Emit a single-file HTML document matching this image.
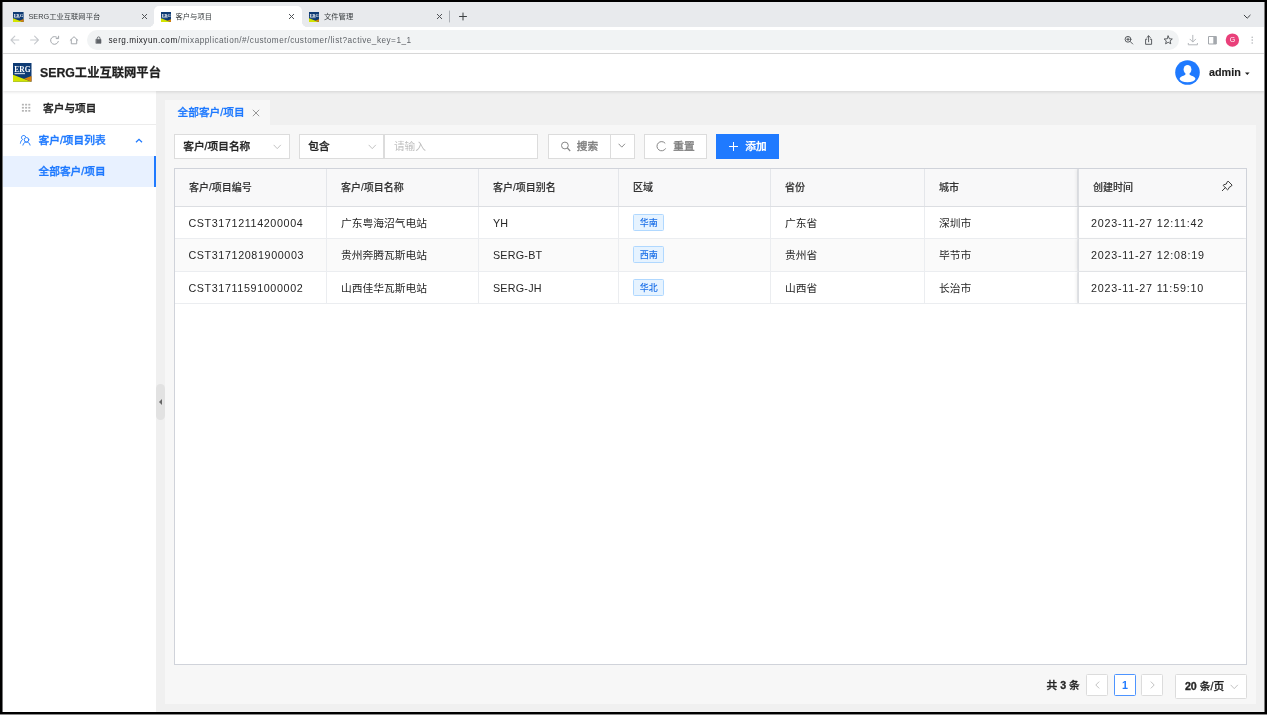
<!DOCTYPE html>
<html lang="zh-CN">
<head>
<meta charset="utf-8">
<title>客户与项目</title>
<style>
*{box-sizing:border-box;margin:0;padding:0}
html,body{width:1267px;height:715px;overflow:hidden;background:#000}
body{position:relative;font-family:"Liberation Sans","Noto Sans CJK SC",sans-serif;color:#222;-webkit-font-smoothing:antialiased}
.abs{position:absolute}
#win{will-change:transform;position:absolute;left:3px;top:2px;width:1261px;height:710px;background:#fff;overflow:hidden;box-shadow:-1px 0 0 rgba(236,238,240,.5),1px 0 0 rgba(245,245,245,.5)}
#bline{position:absolute;left:0;top:714px;width:1267px;height:1px;background:#8a8a8a}
/* chrome tab strip (coords relative to #win) */
#tabs{position:absolute;left:0;top:0;width:1262px;height:25px;background:#e8eaed}
.ctab{position:absolute;top:4px;height:21px;font-size:7.3px;color:#3c4043;line-height:21px;white-space:nowrap}
.ctab .t{position:absolute;left:25.5px;top:-0.5px}
.ctab .x{position:absolute;top:7.9px;width:5.2px;height:5.2px;background:linear-gradient(45deg,transparent 42%,#505357 42%,#505357 58%,transparent 58%),linear-gradient(-45deg,transparent 42%,#505357 42%,#505357 58%,transparent 58%)}
#tab2:before,#tab2:after{content:"";position:absolute;bottom:0;width:5px;height:5px}
#tab2:before{left:-5px;background:radial-gradient(circle at 0 0,transparent 4.7px,#fff 5.2px)}
#tab2:after{right:-5px;background:radial-gradient(circle at 100% 0,transparent 4.7px,#fff 5.2px)}
.fav{position:absolute;left:10px;top:5.5px;width:11px;height:10px;background:#1c3a70;overflow:hidden;border-radius:1px}
.fav:before{content:"";position:absolute;left:0;bottom:0;width:11px;height:4px;background:#cfdc28}
.fav:after{content:"";position:absolute;right:-2px;bottom:-3px;width:8px;height:6px;background:#e8901c;transform:rotate(-28deg)}
#tab2{left:150.5px;width:148px;background:#fff;border-radius:5px 5px 0 0}
/* address bar */
#addr{position:absolute;left:0;top:25px;width:1262px;height:26.5px;background:#fff;border-bottom:1px solid #dcdcdc}
#omni{position:absolute;left:84px;top:3px;width:1092px;height:20px;border-radius:10px;background:#f1f3f4}
#url{position:absolute;left:21.5px;top:1px;line-height:20px;font-size:8.2px;color:#5f6368;white-space:nowrap;letter-spacing:0.49px}
#url b{font-weight:normal;color:#202124}
/* app header */
#hdr{position:absolute;left:0;top:51.5px;width:1262px;height:37.5px;background:#fff;box-shadow:0 1px 3px rgba(0,0,0,.12);z-index:5}
#logo{position:absolute;left:10.5px;top:9.5px;width:18.5px;height:18.5px;background:#1c3a70;overflow:hidden}
#logo:before{content:"";position:absolute;left:0;bottom:0;width:19px;height:7px;background:#cfdc28}
#logo:after{content:"";position:absolute;right:-4px;bottom:-6px;width:14px;height:10px;background:#e8901c;transform:rotate(-28deg)}
#logo span{position:absolute;left:1.5px;top:1px;font:7.5px "Liberation Serif",serif;color:#fff;letter-spacing:-0.3px;text-decoration:underline;z-index:2}
#title{-webkit-text-stroke:.25px #1f1f1f;position:absolute;left:37px;top:1px;line-height:37.5px;font-size:12.3px;font-weight:bold;color:#1f1f1f;white-space:nowrap}
#avatar{position:absolute;left:1172px;top:6.5px;width:25px;height:25px}
#admin{-webkit-text-stroke:.15px #1f1f1f;position:absolute;left:1206px;top:-1px;line-height:38px;font-size:10.8px;font-weight:bold;color:#1f1f1f}
#caret{position:absolute;left:1242px;top:18.300px;width:0;height:0;border-left:2.400px solid transparent;border-right:2.400px solid transparent;border-top:2.700px solid #222}
/* sidebar */
#side{position:absolute;left:0;top:89px;width:153px;height:621px;background:#fff}
#side .ttl{position:absolute;left:0;top:0;width:153px;height:34px;border-bottom:1px solid #ececec;font-size:10.7px;font-weight:500;color:#262626;line-height:34px;-webkit-text-stroke:.35px #262626}
#side .ttl span{position:absolute;left:40px;top:0}
#side .m1{position:absolute;left:0;top:34px;width:153px;height:31px;line-height:31.5px;font-size:10.7px;font-weight:500;-webkit-text-stroke:.35px #1f7aff;color:#1f7aff}
#side .m1 span{position:absolute;left:35.5px}
#side .m2{position:absolute;left:0;top:65px;width:153px;height:30.5px;line-height:31px;font-size:10.7px;font-weight:500;-webkit-text-stroke:.35px #1f7aff;color:#1f7aff;background:#e8f1ff;border-right:2.5px solid #1f7aff}
#side .m2 span{position:absolute;left:35.5px}
/* main */
#main{position:absolute;left:153px;top:89px;width:1109px;height:621px;background:#f0f0f0}
#handle{position:absolute;left:0;top:293px;width:8.5px;height:36px;border-radius:4.5px;background:#e2e2e2}
#handle:after{content:"";position:absolute;left:2.5px;top:15px;border-top:3px solid transparent;border-bottom:3px solid transparent;border-right:3.5px solid #666}
#ptab{-webkit-text-stroke:.3px #1f7aff;position:absolute;left:9px;top:9px;width:105px;height:25px;background:#f7f7f7;font-size:10.7px;font-weight:500;color:#1f7aff;line-height:25px}
#ptab span{position:absolute;left:12.5px;top:0}
#panel{position:absolute;left:9px;top:33.5px;width:1091px;height:579px;background:#f7f7f7}

/* toolbar */
.ctl{position:absolute;top:9px;height:25px;background:#fff;border:1px solid #dcdcdc;font-size:10.7px;line-height:23px;white-space:nowrap}
.ctl .tx{-webkit-text-stroke:.3px currentColor;position:absolute;left:7.800px;top:0;font-weight:500;color:#262626}
.chev{position:absolute;width:8.5px;height:5.7px}
.btn{position:absolute;top:9px;height:25px;background:#fff;border:1px solid #dcdcdc;font-size:10.7px;line-height:23px;font-weight:500;color:#808080;-webkit-text-stroke:.3px currentColor;white-space:nowrap}
/* table */
#tbl{position:absolute;left:9.4px;top:43.2px;width:1072.6px;height:497px;background:#fff;border:1px solid #d0d3da;overflow:hidden}
#thead{position:absolute;left:0;top:0;width:1072px;height:38px;background:#f8f8f9;border-bottom:1px solid #dcdee2}
.th{-webkit-text-stroke:.15px #333;position:absolute;top:0;height:37px;line-height:37px;font-size:10px;font-weight:500;color:#333;padding-left:13.5px;border-right:1px solid #e4e6ea;white-space:nowrap}
.tr{position:absolute;left:0;width:1072px;height:32.4px;border-bottom:1px solid #ebedf0;background:#fff}
.tr.alt{background:#fafafa}
.td{position:absolute;top:0;bottom:0;line-height:32.4px;font-size:10.75px;color:#262626;padding-left:13.5px;border-right:1px solid #ebedf0;white-space:nowrap}
.td.l{letter-spacing:.62px;padding-left:13px}.td.c3.l{letter-spacing:.25px;padding-left:13.5px}.td.c7.l{letter-spacing:.78px;padding-left:11.5px}
.tag{position:absolute;left:14px;top:7px;width:31px;height:17px;border:1px solid #b0d8ff;background:#e6f3ff;color:#1a6fe8;font-size:9px;font-weight:500;line-height:16px;text-indent:-.5px;text-align:center;border-radius:1.5px}
.c1{left:0;width:152px}.c2{left:152px;width:152px}.c3{left:304px;width:140px}.c4{left:444px;width:152px}.c5{left:596px;width:154px}.c6{left:750px;width:153px}.c7{left:903px;width:169px;border-right:none;border-left:1px solid #dcdee2;box-shadow:-2px 0 3px rgba(0,0,0,.06)}
/* pagination */
.pg{position:absolute;top:549px;height:22px;width:22px;background:#fff;border:1px solid #dcdcdc;font-size:10.7px;line-height:20px;text-align:center;border-radius:1.5px}
</style>
</head>
<body>
<div id="win">
  <div id="tabs">
    <svg class="abs" style="left:0;top:0" width="1262" height="25" viewBox="3 2 1262 25" fill="none" stroke-linecap="round">
      <path d="M449.500 11V22" stroke="#9aa0a6" stroke-width=".8"/>
      <path d="M459.500 16.500H466.500M463 13V20" stroke="#3c4043" stroke-width="1"/>
      <path d="M1244.200 15.200 1247.200 18.200 1250.200 15.200" stroke="#3c4043" stroke-width="1"/>
    </svg>
    <div class="ctab" style="left:0;width:150px"><svg class="abs" style="left:10px;top:5.700px" width="10.600" height="10.2" viewBox="0 0 18.5 18.7" preserveAspectRatio="none"><rect width="18.500" height="18.700" fill="#0e3b74"/><path d="M0 11.700 18.500 18.700H0Z" fill="#d3e400"/><path d="M18.500 13 11 15.840 18.500 18.700Z" fill="#d8820c"/><text x="1.300" y="9" font-family="Liberation Serif,serif" font-weight="bold" font-size="9.200" fill="#fff" textLength="16.200" lengthAdjust="spacingAndGlyphs">ERG</text><rect x="1.500" y="9.900" width="10.500" height="1.300" fill="#fff" opacity=".75"/></svg><span class="t">SERG工业互联网平台</span><i class="x" style="left:138.900px"></i></div>
    <div class="ctab" id="tab2"><svg class="abs" style="left:7.500px;top:5.700px" width="10.300" height="10.2" viewBox="0 0 18.5 18.7" preserveAspectRatio="none"><rect width="18.500" height="18.700" fill="#0e3b74"/><path d="M0 11.700 18.500 18.700H0Z" fill="#d3e400"/><path d="M18.500 13 11 15.840 18.500 18.700Z" fill="#d8820c"/><text x="1.300" y="9" font-family="Liberation Serif,serif" font-weight="bold" font-size="9.200" fill="#fff" textLength="16.200" lengthAdjust="spacingAndGlyphs">ERG</text><rect x="1.500" y="9.900" width="10.500" height="1.300" fill="#fff" opacity=".75"/></svg><span class="t" style="left:22px">客户与项目</span><i class="x" style="left:135.600px"></i></div>
    <div class="ctab" style="left:298px;width:150px"><svg class="abs" style="left:7.500px;top:5.700px" width="10.300" height="10.2" viewBox="0 0 18.5 18.7" preserveAspectRatio="none"><rect width="18.500" height="18.700" fill="#0e3b74"/><path d="M0 11.700 18.500 18.700H0Z" fill="#d3e400"/><path d="M18.500 13 11 15.840 18.500 18.700Z" fill="#d8820c"/><text x="1.300" y="9" font-family="Liberation Serif,serif" font-weight="bold" font-size="9.200" fill="#fff" textLength="16.200" lengthAdjust="spacingAndGlyphs">ERG</text><rect x="1.500" y="9.900" width="10.500" height="1.300" fill="#fff" opacity=".75"/></svg><span class="t" style="left:23px">文件管理</span><i class="x" style="left:135.800px"></i></div>
  </div>
  <div id="addr">
    <div id="omni"><span id="url"><b>serg.mixyun.com</b>/mixapplication/#/customer/customer/list?active_key=1_1</span></div>

    <svg class="abs" style="left:0;top:0" width="1262" height="26" viewBox="3 27 1262 26" fill="none" stroke-linecap="round" stroke-linejoin="round">
      <g stroke="#c6c9cd" stroke-width="1.1">
        <path d="M18.800 40H11.200M14.800 36.200 11 40 14.800 43.800"/>
        <path d="M30.600 40H38.200M34.600 36.200 38.400 40 34.600 43.800"/>
      </g>
      <g stroke="#a4a8ad" stroke-width="1">
        <path d="M57.600 38A3.900 3.900 0 1 0 58.300 41.500M58.600 36.200V38.600H56.200"/>
        <path d="M70.200 40.300 74 36.700 77.800 40.300M71.300 39.600V43.800H76.700V39.600"/>
      </g>
      <path d="M96.200 39.400h4.800v3.900h-4.800z" fill="#5f6368" stroke="#5f6368" stroke-width=".6"/>
      <path d="M97.200 39.400V38.300a1.400 1.400 0 0 1 2.800 0V39.400" stroke="#5f6368" stroke-width=".9"/>
      <g stroke="#4a4d51" stroke-width=".9">
        <circle cx="1128" cy="39.300" r="2.900"/><path d="M1130.200 41.500 1132.700 44M1126.700 39.300H1129.300M1128 38V40.600"/>
        <path d="M1146.800 39.200H1145.600V44.300H1151.600V39.200H1150.400M1148.600 41.800V36M1146.900 37.500 1148.600 35.800 1150.300 37.500"/>
        <path d="M1168.200 36 1169.400 38.800 1172.300 39 1170.100 40.900 1170.800 43.800 1168.200 42.300 1165.600 43.800 1166.300 40.900 1164.100 39 1167 38.800Z"/>
      </g>
      <g stroke="#b4b7bb" stroke-width="1">
        <path d="M1192.800 35.300V41.800M1190 39.200 1192.800 42 1195.600 39.200M1188.300 43.400V44.800H1197.400V43.400"/>
      </g>
      <path d="M1208.900 36.500H1216.300V44H1208.900Z" stroke="#a4a8ad" stroke-width="1"/><path d="M1213.300 36.500H1216.300V44H1213.300Z" fill="#a4a8ad"/>
      <circle cx="1232.400" cy="40.100" r="6.700" fill="#e9407a"/>
      <g fill="#b4b7bb"><circle cx="1252.200" cy="37.200" r=".8"/><circle cx="1252.200" cy="40.100" r=".8"/><circle cx="1252.200" cy="43" r=".8"/></g>
    </svg>
    <span class="abs" style="left:1225.400px;top:9.3px;font-size:7px;color:#fff;line-height:8px;width:8px;text-align:center">G</span>
  </div>
  <div id="hdr">
    <svg class="abs" style="left:10.200px;top:9.5px" width="18.5" height="18.7" viewBox="0 0 18.5 18.7" preserveAspectRatio="none"><rect width="18.500" height="18.700" fill="#0e3b74"/><path d="M0 11.700 18.500 18.700H0Z" fill="#d3e400"/><path d="M18.500 13 11 15.840 18.500 18.700Z" fill="#d8820c"/><text x="1.300" y="9" font-family="Liberation Serif,serif" font-weight="bold" font-size="9.200" fill="#fff" textLength="16.200" lengthAdjust="spacingAndGlyphs">ERG</text><rect x="1.500" y="9.900" width="10.500" height="1.300" fill="#fff" opacity=".75"/></svg>
    <div id="title">SERG工业互联网平台</div>
    <svg id="avatar" viewBox="0 0 25 25"><circle cx="12.500" cy="12.500" r="12.300" fill="#1f7aff"/><ellipse cx="12.500" cy="9.500" rx="3.900" ry="4.500" fill="#fff"/><path d="M10.600 12.500C10.800 14.600 10 15.700 7.500 16.600H17.500C15 15.700 14.200 14.600 14.400 12.500Z" fill="#fff"/><ellipse cx="12.500" cy="18.700" rx="7.900" ry="3.500" fill="#fff"/></svg>
    <div id="admin">admin</div><svg class="abs" style="left:1241px;top:17px" width="7" height="5" viewBox="0 0 7 5"><path d="M1 1.400H5.600L3.300 3.900Z" fill="#1f1f1f"/></svg>
  </div>
  <div id="side">
    <svg class="abs" style="left:0;top:0" width="153" height="100" viewBox="3 91 153 100" fill="none">
      <g fill="#b4b4b4"><rect x="21.900" y="103.800" width="2" height="1.700"/><rect x="25.100" y="103.800" width="2" height="1.700"/><rect x="28.300" y="103.800" width="2" height="1.700"/><rect x="21.900" y="106.900" width="2" height="1.700"/><rect x="25.100" y="106.900" width="2" height="1.700"/><rect x="28.300" y="106.900" width="2" height="1.700"/><rect x="21.900" y="110" width="2" height="1.700"/><rect x="25.100" y="110" width="2" height="1.700"/><rect x="28.300" y="110" width="2" height="1.700"/></g>
      <g stroke="#1f7aff" stroke-width=".95" stroke-linecap="round">
        <circle cx="26.500" cy="139.800" r="2.300"/>
        <path d="M22.900 145.100C23.300 142.900 25 142.100 26.500 142.100S29.700 142.900 30.100 145.100"/>
        <path d="M25.700 136.700A2.200 2.200 0 1 0 22.600 139.500C21.400 140.300 20.600 141.600 20.400 143.200"/>
      </g>
      <path d="M136 142.300 139 139.300 142 142.300" stroke="#1f7aff" stroke-width="1.300"/>
    </svg>
    <div class="ttl"><span>客户与项目</span></div>
    <div class="m1"><span>客户/项目列表</span></div>
    <div class="m2"><span>全部客户/项目</span></div>
  </div>
  <div id="main">
    <div id="handle"></div>
    <div id="ptab"><span>全部客户/项目</span><svg class="abs" style="left:86.5px;top:9px" width="8" height="8" viewBox="0 0 8 8"><path d="M.8 .8 7.200 7.200M7.200 .8 .8 7.200" stroke="#8c8c8c" stroke-width=".9"/></svg></div>
    <div id="panel">
      <div class="ctl" style="left:9.4px;width:116px"><span class="tx">客户/项目名称</span><svg class="chev" style="left:98px;top:9px" viewBox="0 0 9 6"><path d="M.7 .9 4.500 4.900 8.300 .9" fill="none" stroke="#b8b8b8" stroke-width=".9"/></svg></div>
      <div class="ctl" style="left:134.4px;width:85px"><span class="tx">包含</span><svg class="chev" style="left:68px;top:9px" viewBox="0 0 9 6"><path d="M.7 .9 4.500 4.900 8.300 .9" fill="none" stroke="#b8b8b8" stroke-width=".9"/></svg></div>
      <div class="ctl" style="left:219.400px;width:154px"><span class="tx" style="font-weight:normal;color:#bfbfbf;-webkit-text-stroke:0;left:8.500px">请输入</span></div>
      <div class="btn" style="left:382.8px;width:63.5px"><svg class="abs" style="left:11.800px;top:6px" width="11" height="11" viewBox="0 0 11 11"><circle cx="3.900" cy="4.500" r="3.400" fill="none" stroke="#868686" stroke-width="1"/><path d="M6.400 7 9.200 10" stroke="#868686" stroke-width="1.100"/></svg><span class="abs" style="left:28px;top:0">搜索</span></div>
      <div class="btn" style="left:445.3px;width:24.5px"><svg class="chev" style="left:7.200px;top:8.700px;width:7.600px;height:5.100px" viewBox="0 0 9 6"><path d="M.7 .9 4.500 4.900 8.300 .9" fill="none" stroke="#8a8a8a" stroke-width="1.150"/></svg></div>
      <div class="btn" style="left:479.2px;width:62.6px"><svg class="abs" style="left:10.500px;top:5.500px" width="12" height="12" viewBox="0 0 12 12"><path d="M9.220 3.370A4.600 4.600 0 1 0 9.660 8.360" fill="none" stroke="#868686" stroke-width="1"/></svg><span class="abs" style="left:28px;top:0">重置</span></div>
      <div class="btn" style="left:551.2px;width:63px;background:#1f7aff;border-color:#1f7aff;color:#fff"><svg class="abs" style="left:11.200px;top:6px" width="11" height="11" viewBox="0 0 11 11"><path d="M5.500 1V10M1 5.500H10" stroke="#fff" stroke-width="1"/></svg><span class="abs" style="left:28.100px;top:0">添加</span></div>
      <div id="tbl">
        <div id="thead">
          <div class="th c1">客户/项目编号</div><div class="th c2">客户/项目名称</div><div class="th c3">客户/项目别名</div><div class="th c4">区域</div><div class="th c5">省份</div><div class="th c6">城市</div><div class="th c7">创建时间<svg class="abs" style="left:143px;top:12px" width="11" height="11" viewBox="0 0 11 11"><path d="M6.400 .4 10 4 9.500 5 7 6.500 6.300 8.300 5.500 8.800 1.200 4.500 1.600 3.800 4.300 3 5.300 .8ZM3.300 6.700 .2 9.800" fill="none" stroke="#3c3c3c" stroke-width="1" stroke-linejoin="round" stroke-linecap="round"/></svg></div>
        </div>
        <div class="tr" style="top:38px;height:32px"><div class="td c1 l">CST31712114200004</div><div class="td c2">广东粤海沼气电站</div><div class="td c3 l">YH</div><div class="td c4"><span class="tag">华南</span></div><div class="td c5">广东省</div><div class="td c6">深圳市</div><div class="td c7 l">2023-11-27 12:11:42</div></div>
        <div class="tr alt" style="top:70px;height:33px"><div class="td c1 l">CST31712081900003</div><div class="td c2">贵州奔腾瓦斯电站</div><div class="td c3 l">SERG-BT</div><div class="td c4"><span class="tag">西南</span></div><div class="td c5">贵州省</div><div class="td c6">毕节市</div><div class="td c7 l">2023-11-27 12:08:19</div></div>
        <div class="tr" style="top:103px;height:32px"><div class="td c1 l">CST31711591000002</div><div class="td c2">山西佳华瓦斯电站</div><div class="td c3 l">SERG-JH</div><div class="td c4"><span class="tag">华北</span></div><div class="td c5">山西省</div><div class="td c6">长治市</div><div class="td c7 l">2023-11-27 11:59:10</div></div>
      </div>
      <div class="abs" style="left:881.5px;top:549px;line-height:22px;font-size:10.7px;font-weight:500;-webkit-text-stroke:.3px #262626;color:#262626;white-space:nowrap">共 <b>3</b> 条</div>
      <div class="pg" style="left:921.3px"><svg class="abs" style="left:7.5px;top:6px" width="5" height="8" viewBox="0 0 5 8"><path d="M4.200 .6 .8 4 4.200 7.400" fill="none" stroke="#bbb" stroke-width=".9"/></svg></div>
      <div class="pg" style="left:949px;border-color:#4d94ff;color:#1f7aff;font-weight:bold">1</div>
      <div class="pg" style="left:976.4px"><svg class="abs" style="left:7.5px;top:6px" width="5" height="8" viewBox="0 0 5 8"><path d="M.8 .6 4.200 4 .8 7.400" fill="none" stroke="#bbb" stroke-width=".9"/></svg></div>
      <div class="ctl" style="left:1010.4px;top:549.5px;width:71.6px;height:25px;line-height:23px;border-radius:1.5px"><span class="tx" style="left:8.500px"><b>20</b> 条/页</span><svg class="chev" style="left:54px;top:9px" viewBox="0 0 9 6"><path d="M.7 .9 4.500 4.900 8.300 .9" fill="none" stroke="#b8b8b8" stroke-width=".9"/></svg></div>
    </div>
  </div>
</div>
<div id="bline"></div>
</body>
</html>
